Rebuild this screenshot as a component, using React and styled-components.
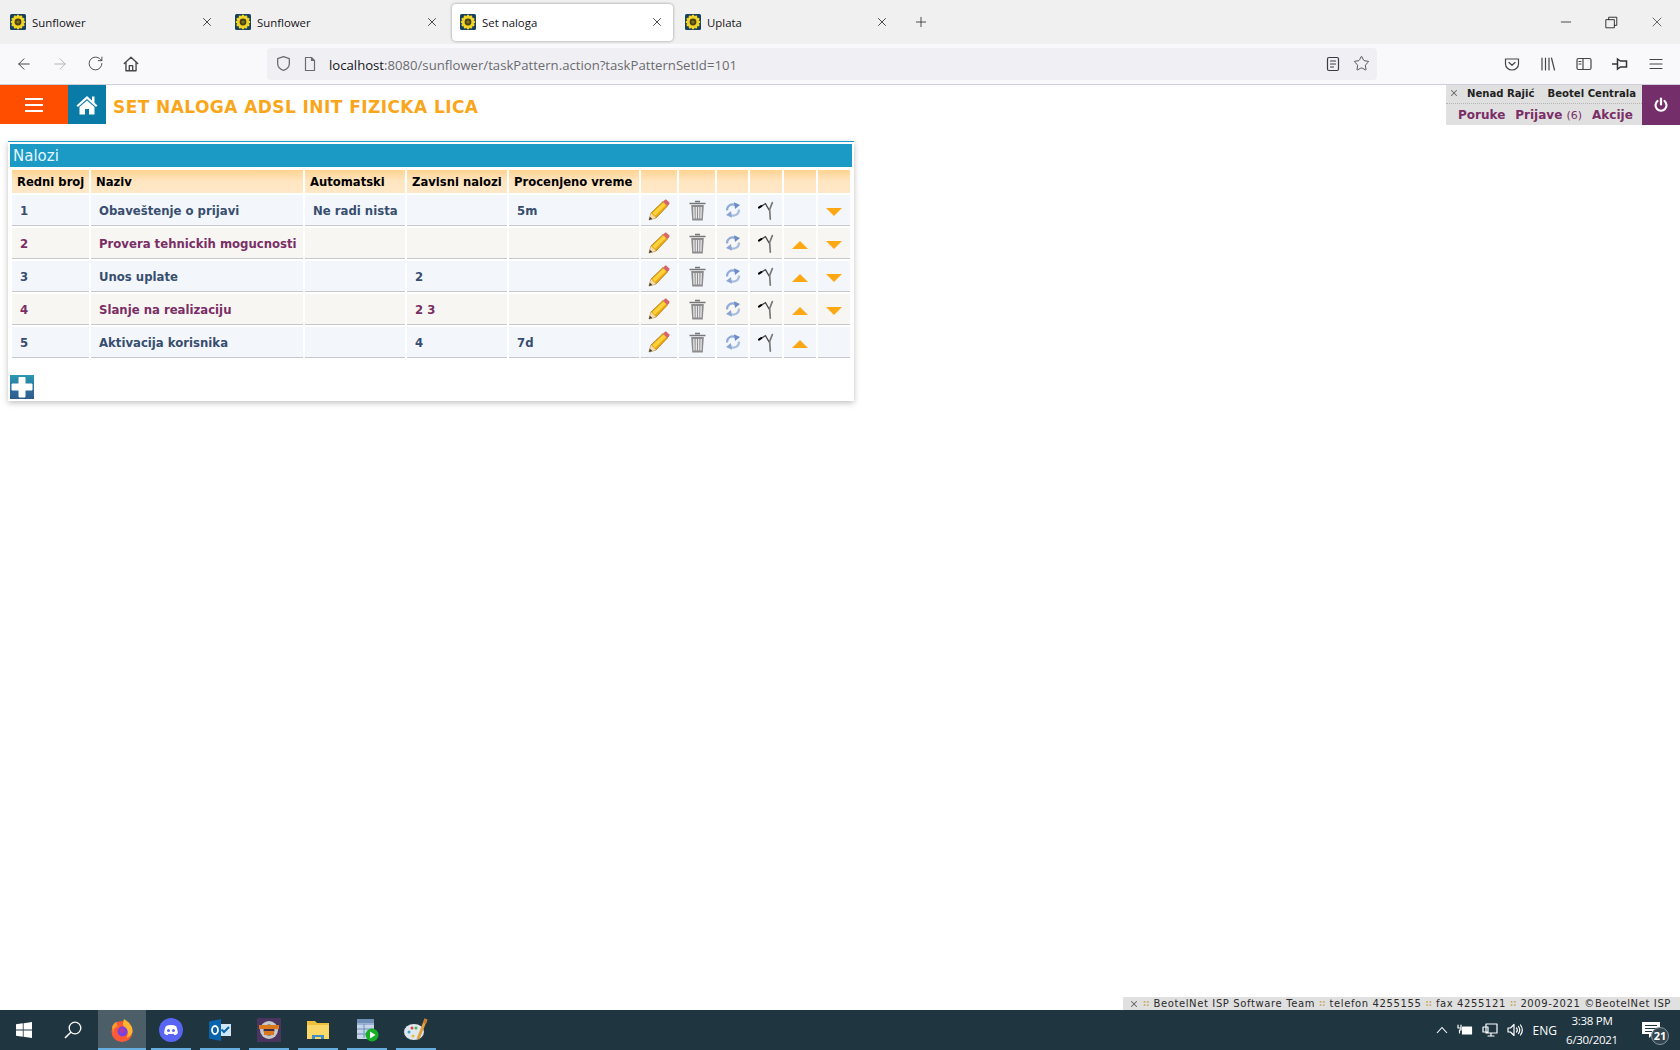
import React from "react";
import styled, { createGlobalStyle } from "styled-components";
import { ArrowLeft, ArrowRight, RotateCw, Star, Plus, X, Minus } from "lucide-react";

const GlobalStyle = createGlobalStyle`
  html, body { margin: 0; padding: 0; background: #fff; }
  body { font-family: "DejaVu Sans", Verdana, sans-serif; overflow: hidden; }
  * { box-sizing: border-box; }
`;

const Page = styled.div`
  display: flex;
  flex-direction: column;
  width: 1680px;
  height: 1050px;
`;

/* browser chrome */
const TabStrip = styled.div`
  display: flex;
  align-items: center;
  height: 44px;
  background: #f0f0f0;
  padding: 0 0 0 2px;
  gap: 4px;
  font-family: "Open Sans", "Noto Sans", sans-serif;
`;

const Tab = styled.div`
  display: flex;
  align-items: center;
  width: 221px;
  height: 37px;
  padding: 0 9px 0 8px;
  border-radius: 4px;
  font-size: 11.4px;
  color: #15141a;
  background: ${(p) => (p.$active ? "#fff" : "transparent")};
  box-shadow: ${(p) => (p.$active ? "0 0 3px rgba(0,0,0,.4)" : "none")};
`;

const TabLabel = styled.span`
  flex: 1;
  margin-left: 6px;
`;

const NewTab = styled.div`
  display: flex;
  margin-left: 11px;
  color: #333;
`;

const WindowControls = styled.div`
  display: flex;
  align-items: center;
  margin-left: auto;
  gap: 31px;
  padding-right: 15px;
  color: #222;
`;

const NavBar = styled.div`
  display: flex;
  align-items: center;
  height: 41px;
  background: #f9f9fb;
  border-bottom: 1px solid #cfcfd8;
  padding: 0 16px 1px 15px;
  color: #4a4a4f;
`;

const NavButtons = styled.div`
  display: flex;
  gap: 18px;
  width: 252px;
`;

const NavSlot = styled.span`
  display: flex;
  color: ${(p) => (p.$muted ? "#b4b4b8" : "#45454a")};
`;

const UrlBar = styled.div`
  display: flex;
  align-items: center;
  width: 1110px;
  height: 32px;
  background: #f0f0f4;
  border-radius: 4px;
  padding: 0 7px 0 8px;
  gap: 10px;
  font-family: "Open Sans", "Noto Sans", sans-serif;
  font-size: 13.15px;
  color: #6b6b70;
`;

const UrlText = styled.span`
  flex: 1;
  padding: 2px 0 0 1px;
`;

const UrlHost = styled.span`
  color: #15141a;
`;

const UrlActions = styled.div`
  display: flex;
  align-items: center;
  gap: 12px;
  color: #3a3a40;
`;

const NavTools = styled.div`
  display: flex;
  margin-left: auto;
  gap: 20px;
`;

/* application header */
const AppHeader = styled.header`
  display: flex;
  height: 40px;
  background: #fff;
`;

const MenuButton = styled.div`
  display: flex;
  align-items: center;
  justify-content: center;
  width: 68px;
  height: 39px;
  background: #ff4e00;
`;

const HomeButton = styled.div`
  display: flex;
  align-items: center;
  justify-content: center;
  width: 38px;
  height: 39px;
  background: #0a7aa6;
`;

const PageTitle = styled.h1`
  margin: 0 0 0 7px;
  padding-top: 3px;
  flex: 1;
  font-size: 17px;
  line-height: 39px;
  font-weight: 700;
  color: #faa61a;
  letter-spacing: 0.43px;
`;

const UserBox = styled.div`
  display: flex;
  flex-direction: column;
  width: 196px;
  height: 40px;
  background: #e0e0e0;
  white-space: nowrap;
`;

const UserRow = styled.div`
  display: flex;
  align-items: center;
  height: 19px;
  padding: 0 0 2px 3px;
  font-size: 10.1px;
  font-weight: 700;
  color: #222;
  border-bottom: 1px dotted #b5b5b5;
`;

const UserName = styled.span`
  margin-left: ${(p) => p.$gap}px;
`;

const UserLinks = styled.div`
  display: flex;
  align-items: center;
  flex: 1;
  padding-left: 12px;
  gap: 10px;
  font-size: 12px;
  font-weight: 700;
  color: #7a2e66;
`;

const Count = styled.span`
  font-weight: 400;
  font-size: 11px;
`;

const PowerButton = styled.div`
  display: flex;
  align-items: center;
  justify-content: center;
  width: 38px;
  height: 40px;
  background: #742f6a;
`;

/* content */
const Main = styled.main`
  flex: 1;
  padding: 16px 0 0 8px;
`;

const Panel = styled.section`
  width: 846px;
  padding: 2px;
  border-top: 1px solid #1b9ac6;
  background: #fff;
  box-shadow: 0 2px 6px rgba(0, 0, 0, 0.25);
`;

const PanelTitle = styled.div`
  height: 23px;
  padding-left: 3px;
  background: #1b9ac6;
  color: #e4f6fc;
  font-size: 15px;
  line-height: 25px;
`;

const Table = styled.table`
  table-layout: fixed;
  width: 842px;
  margin-top: 1px;
  border-collapse: separate;
  border-spacing: 2px;
`;

const HeadCell = styled.th`
  height: 23px;
  padding: 0 5px;
  text-align: left;
  font-size: 11.6px;
  font-weight: 700;
  white-space: nowrap;
  color: #000;
  background: linear-gradient(#ffd391, #ffe6c2 50%, #ffe8c8);
`;

const Cell = styled.td`
  height: 31px;
  padding: 1px 8px 0;
  font-size: 11.7px;
  font-weight: 700;
  white-space: nowrap;
  color: ${(p) => (p.$even ? "#7a2e66" : "#384e6f")};
  background: ${(p) => (p.$even ? "#f8f6f3" : "#f3f7fc")};
  border-bottom: 1px solid #c6c8cc;
`;

const IconCell = styled(Cell)`
  padding: 0;
  text-align: center;
  svg { display: block; margin: 0 auto; }
`;

const ArrowCell = styled(IconCell)`
  padding-top: 4px;
`;

const AddButton = styled.div`
  display: flex;
  align-items: center;
  justify-content: center;
  width: 24px;
  height: 24px;
  margin-top: 15px;
  background: linear-gradient(#2a9ab0, #2f6f9c 60%, #2c5c8c);
`;

/* status line and taskbar */
const StatusLine = styled.footer`
  display: flex;
  align-items: center;
  align-self: flex-end;
  width: 557px;
  height: 13px;
  padding-left: 6px;
  gap: 4px;
  background: #e0e0e0;
  color: #2a2a2a;
  font-size: 10px;
  letter-spacing: 0.62px;
  white-space: nowrap;
`;

const Sep = styled.span`
  color: #c9a95c;
  font-weight: 700;
  font-size: 8px;
  letter-spacing: 0;
`;

const Taskbar = styled.div`
  display: flex;
  align-items: stretch;
  height: 40px;
  background: #1f3540;
  color: #fff;
`;

const TaskIcon = styled.div`
  display: flex;
  align-items: center;
  justify-content: center;
  width: 48px;
  margin-right: 1px;
`;

const TaskApp = styled(TaskIcon)`
  position: relative;
  background: ${(p) => (p.$active ? "#4c5f69" : "transparent")};
  &::after {
    content: "";
    position: absolute;
    left: ${(p) => (p.$active ? 0 : "4px")};
    right: ${(p) => (p.$active ? 0 : "4px")};
    bottom: 0;
    height: 2px;
    background: #66aee0;
  }
`;

const Tray = styled.div`
  display: flex;
  align-items: center;
  margin-left: auto;
  gap: 9px;
  font-family: "Open Sans", "Noto Sans", sans-serif;
  font-size: 12px;
`;

const Lang = styled.span`
  margin-left: 1px;
`;

const Clock = styled.div`
  display: flex;
  flex-direction: column;
  align-items: center;
  width: 52px;
  font-size: 11.5px;
  letter-spacing: -0.3px;
  line-height: 19px;
  white-space: nowrap;
`;

const Notify = styled.div`
  position: relative;
  display: flex;
  margin: 0 19px 0 14px;
`;

const Badge = styled.span`
  position: absolute;
  right: -8px;
  bottom: -6px;
  width: 18px;
  height: 18px;
  border-radius: 50%;
  border: 1px solid #8a979e;
  background: #33464f;
  font-size: 11px;
  font-weight: 700;
  line-height: 16px;
  text-align: center;
`;

/* drawings */
const petals = [0, 30, 60, 90, 120, 150];

const Favicon = () => (
  <svg width="16" height="16" viewBox="0 0 16 16">
    <rect width="16" height="16" rx="1.5" fill="#16405e" />
    {petals.map((deg) => (
      <ellipse key={deg} cx="8" cy="8" rx="2.6" ry="7.4" fill="#f2d426" transform={`rotate(${deg} 8 8)`} />
    ))}
    <circle cx="8" cy="8" r="3.4" fill="#4a4214" />
    <circle cx="8" cy="8" r="1.6" fill="#7d7420" />
  </svg>
);

const Line = ({ size = 16, children, sw = 1.2 }) => (
  <svg width={size} height={size} viewBox="0 0 16 16" fill="none" stroke="currentColor" strokeWidth={sw} strokeLinecap="round" strokeLinejoin="round">
    {children}
  </svg>
);

const RestoreIcon = () => (
  <Line size={13} sw={1.1}>
    <path d="M1.5 4.500h10v10h-10zM4.500 4.500v-3h10v10h-3" />
  </Line>
);

const HomeOutline = () => (
  <Line size={18}>
    <path d="M2 7.500 8 2l6 5.500M3.500 6.500V14h9V6.500M6.500 14V9.500h3V14" />
  </Line>
);

const Shield = () => (
  <Line size={17}>
    <path d="M8 1.500 13.500 3.500v4.500c0 3.200-2.400 5.400-5.500 6.500C4.900 13.400 2.500 11.200 2.500 8V3.500z" />
  </Line>
);

const PageIcon = () => (
  <Line size={16}>
    <path d="M3.500 1.500h6l3 3v10h-9zM9.500 1.500v3h3" />
  </Line>
);

const Reader = () => (
  <Line size={16}>
    <rect x="2.500" y="1.500" width="11" height="13" rx="1.500" />
    <path d="M5.500 5h5M5.500 8h5M5.500 11h3" />
  </Line>
);

const Pocket = () => (
  <Line size={16}>
    <path d="M1.500 3h13v5a6.500 6 0 0 1-13 0zM5 6.500l3 2.800 3-2.800" />
  </Line>
);

const LibraryIcon = () => (
  <Line size={16}>
    <path d="M2 2v12M5.500 2v12M9 2v12M11.500 2l3 12" />
  </Line>
);

const SidebarIcon = () => (
  <Line size={16}>
    <rect x="1" y="2.500" width="14" height="11" rx="1.500" />
    <path d="M7 2.500v11M3 5.500h2M3 8h2" />
  </Line>
);

const PinIcon = () => (
  <svg width="16" height="16" viewBox="0 0 16 16" fill="none" stroke="#33333a" strokeWidth="1.500">
    <path d="M0 8h5" />
    <path d="M5.500 3 8.500 5h6v6h-6l-3 2z" />
  </svg>
);

const BurgerThin = () => (
  <Line size={16}>
    <path d="M2 3.500h12M2 8h12M2 12.500h12" />
  </Line>
);

const Burger = () => (
  <svg width="18" height="16" viewBox="0 0 18 16" fill="none" stroke="#fff" strokeWidth="2">
    <path d="M0 2h18M0 8h18M0 14h18" />
  </svg>
);

const HouseIcon = () => (
  <svg width="22" height="20" viewBox="0 0 22 20">
    <path d="M11 1 0.500 10.500 2 12l9-8 9 8 1.500-1.500-3-2.800V1.500h-2.500v3.900z" fill="#fff" />
    <path d="M11 5.500 3.500 12v7.500h5.500v-5.500h4v5.500h5.500V12z" fill="#fff" />
  </svg>
);

const PowerIcon = () => (
  <svg width="16" height="16" viewBox="0 0 16 16" fill="none" stroke="#fff" strokeWidth="2.200" strokeLinecap="round">
    <path d="M8 1.500v6" />
    <path d="M4.500 4a5.500 5.500 0 1 0 7 0" />
  </svg>
);

const PencilIcon = () => (
  <svg width="22" height="22" viewBox="0 0 22 22">
    <path d="M1 21 3 14 15 2.500l4.500 4.500L8 19z" fill="#eda90f" stroke="#9c7014" strokeWidth=".7" />
    <path d="M4.500 14 15.500 3.500 18 6 7 16.800z" fill="#ffd23c" />
    <path d="M1 21 3 14l5 5z" fill="#f4dcb0" />
    <path d="M1 21l.9-3.300 2.400 2.400z" fill="#333" />
    <path d="M15 2.500 16.800 .9c.6-.5 1.300-.5 1.900 0l2.400 2.400c.5.600.5 1.300 0 1.900L19.500 7z" fill="#d9646a" />
  </svg>
);

const TrashIcon = () => (
  <svg width="17" height="21" viewBox="0 0 17 21">
    <path d="M6 1.500h5M.5 3.500h16" stroke="#77777a" strokeWidth="1.600" fill="none" />
    <path d="M2.200 5h12.600l-1 15.500H3.200z" fill="#8c8c8f" />
    <path d="M4.800 7l.3 11.500M7.300 7v11.500M9.700 7v11.500M12.200 7l-.3 11.500" stroke="#ececec" strokeWidth="1.300" fill="none" />
  </svg>
);

const RefreshIcon = () => (
  <svg width="16" height="16" viewBox="0 0 16 16" fill="none">
    <path d="M2 8.500C1.800 4 6 1.200 10.500 3" stroke="#93abd8" strokeWidth="2.200" />
    <path d="M9 .2 15 3l-5 4z" fill="#6b8cc6" />
    <path d="M14 7.500C14.200 12 10 14.800 5.500 13" stroke="#a9bde0" strokeWidth="2.200" />
    <path d="M7 15.800 1 13l5-4z" fill="#8ca6d4" />
  </svg>
);

const ToolIcon = () => (
  <svg width="17" height="19" viewBox="0 0 16 18" fill="none" strokeLinecap="round">
    <path d="M3 5 7 2.500 10.500 8.500" stroke="#4a4a4a" strokeWidth="1.300" />
    <path d="M.8 6.200 3 4.800" stroke="#000" strokeWidth="2" />
    <path d="M13.500 1.500 11 8l.6 9.200" stroke="#7a7a7a" strokeWidth="1.600" />
  </svg>
);

const UpArrow = () => (
  <svg width="16" height="8" viewBox="0 0 16 8">
    <path d="M8 0 16 8H0z" fill="#ffa815" />
  </svg>
);

const DownArrow = () => (
  <svg width="16" height="8" viewBox="0 0 16 8">
    <path d="M0 0H16L8 8z" fill="#ffa815" />
  </svg>
);

const AddCross = () => (
  <svg width="22" height="22" viewBox="0 0 22 22">
    <path d="M8 1.500h6V8h7v6h-7v7H8v-7H1V8h7z" fill="#fff" stroke="#fff" strokeLinejoin="round" />
  </svg>
);

const WindowsLogo = () => (
  <svg width="16" height="16" viewBox="0 0 16 16" fill="#fff">
    <path d="M0 2.300 6.800 1.300v6.300H0zM7.600 1.200 16 0v7.600H7.600zM0 8.400h6.800v6.300L0 13.700zM7.600 8.400H16V16l-8.400-1.200z" />
  </svg>
);

const SearchGlass = () => (
  <svg width="18" height="18" viewBox="0 0 18 18" fill="none" stroke="#fff" strokeWidth="1.300">
    <circle cx="11" cy="7" r="5.800" />
    <path d="M6.800 11.200 1 17" strokeWidth="1.600" />
  </svg>
);

const FirefoxLogo = () => (
  <svg width="24" height="24" viewBox="0 0 24 24">
    <circle cx="12" cy="13.500" r="10.500" fill="#ff5a36" />
    <path d="M14 1c5 3 9 7 8.500 13-1 3-3 5-6 6 2-4 2-8-2.500-11-1.500-2-1-5 0-8z" fill="#ffb52e" />
    <path d="M2 9c1-3 3-5 5-5-1 2 0 3 1 4-3 1-5 3-4.500 8z" fill="#ff9a2e" />
    <circle cx="12.500" cy="13.500" r="5" fill="#7542e5" />
    <circle cx="12" cy="12.500" r="2.500" fill="#b03ba8" />
  </svg>
);

const DiscordLogo = () => (
  <svg width="24" height="24" viewBox="0 0 24 24">
    <circle cx="12" cy="12" r="12" fill="#5865f2" />
    <path d="M7 8c3-1.200 7-1.200 10 0 1.300 2.500 1.800 5 1.800 7.500-1.300 1-2.500 1.500-3.500 1.600l-.8-1.300c-1.600.4-3.400.4-5 0l-.8 1.300c-1-.1-2.200-.6-3.500-1.600C5.200 13 5.700 10.500 7 8z" fill="#fff" />
    <circle cx="9.500" cy="12.500" r="1.500" fill="#5865f2" />
    <circle cx="14.500" cy="12.500" r="1.500" fill="#5865f2" />
  </svg>
);

const OutlookLogo = () => (
  <svg width="24" height="24" viewBox="0 0 24 24">
    <rect x="11" y="6" width="12" height="12" fill="#cfe6f7" />
    <path d="M13.500 11.500l2.500 2.500 5-5" stroke="#0a64ad" strokeWidth="2" fill="none" />
    <path d="M1 3.500 13 1v22L1 20.500z" fill="#0a64ad" />
    <ellipse cx="7" cy="12" rx="3" ry="4" fill="none" stroke="#fff" strokeWidth="1.800" />
  </svg>
);

const IdeLogo = () => (
  <svg width="24" height="24" viewBox="0 0 24 24">
    <rect width="24" height="24" fill="#4a3560" />
    <circle cx="12" cy="12" r="9" fill="#c8c8c8" />
    <circle cx="12" cy="12" r="5.500" fill="#3d2a4c" />
    <rect x="2" y="7" width="20" height="4" fill="#d9791c" />
    <rect x="7" y="13" width="10" height="4" fill="#d9791c" />
  </svg>
);

const FolderLogo = () => (
  <svg width="24" height="24" viewBox="0 0 24 24">
    <path d="M1 3h8l2 2h12v16H1z" fill="#f0c23c" />
    <path d="M1 7h22v14H1z" fill="#fbd968" />
    <path d="M6 21v-4h12v4h-3v-2H9v2z" fill="#3f8fc4" />
  </svg>
);

const TableRunLogo = () => (
  <svg width="24" height="24" viewBox="0 0 24 24">
    <rect x="2" y="1" width="17" height="20" rx="1" fill="#c7d6ea" />
    <path d="M2 6h17M2 11h17M2 16h12M9 6v14" stroke="#6f8fb8" strokeWidth="1" />
    <rect x="2" y="1" width="17" height="4" fill="#6f8fb8" />
    <circle cx="17" cy="17" r="6.500" fill="#15b024" />
    <path d="M15 13.500 20.500 17 15 20.500z" fill="#fff" />
  </svg>
);

const PaintLogo = () => (
  <svg width="24" height="24" viewBox="0 0 24 24">
    <ellipse cx="10" cy="14" rx="10" ry="8" fill="#dfe8ee" />
    <circle cx="5" cy="14" r="1.500" fill="#3fa0d8" />
    <circle cx="8" cy="10" r="1.500" fill="#e04040" />
    <circle cx="12" cy="10" r="1.500" fill="#50b050" />
    <circle cx="9" cy="18" r="1.500" fill="#e0c040" />
    <path d="M22 1 14 21" stroke="#e0a040" strokeWidth="3" />
    <path d="M20.500 0.500 23.500 2 22 6l-3-1.200z" fill="#c87a30" />
  </svg>
);

const TrayChevron = () => (
  <svg width="12" height="8" viewBox="0 0 12 8" fill="none" stroke="#fff" strokeWidth="1.100">
    <path d="M1 7l5-5.500L11 7" />
  </svg>
);

const TrayPower = () => (
  <Line size={16}>
    <rect x="5.500" y="5" width="9" height="7" fill="#fff" />
    <path d="M1 3v3M4 3v3M1 6h3v2H2.500v3" />
  </Line>
);

const TrayNetwork = () => (
  <Line size={16}>
    <path d="M4 2h11v9H4zM1 5h5v5H1zM9 11v3M6 14h6" />
  </Line>
);

const TraySound = () => (
  <Line size={16}>
    <path d="M1 6h2.500L7 2.500v11L3.500 10H1zM9.500 6c1 1.200 1 2.800 0 4M11.500 4.500c1.600 2.200 1.600 4.800 0 7M13.500 3c2.200 3 2.200 7 0 10" />
  </Line>
);

const TrayMessages = () => (
  <svg width="20" height="18" viewBox="0 0 20 18" fill="#fff">
    <path d="M1 1h18v12h-7l-4 4v-4H1z" />
    <path d="M4 4.500h12M4 7.500h12M4 10.500h7" stroke="#1f3540" strokeWidth="1.100" />
  </svg>
);

/* data */
const tabs = [
  { label: "Sunflower" },
  { label: "Sunflower" },
  { label: "Set naloga", active: true },
  { label: "Uplata" },
];

const columns = [
  { title: "Redni broj", width: 77 },
  { title: "Naziv", width: 212 },
  { title: "Automatski", width: 100 },
  { title: "Zavisni nalozi", width: 100 },
  { title: "Procenjeno vreme", width: 130 },
  { title: "", width: 36 },
  { title: "", width: 36 },
  { title: "", width: 31 },
  { title: "", width: 32 },
  { title: "", width: 32 },
  { title: "", width: 32 },
];

const rows = [
  { no: "1", name: "Obaveštenje o prijavi", auto: "Ne radi nista", deps: "", time: "5m", up: false, down: true },
  { no: "2", name: "Provera tehnickih mogucnosti", auto: "", deps: "", time: "", up: true, down: true },
  { no: "3", name: "Unos uplate", auto: "", deps: "2", time: "", up: true, down: true },
  { no: "4", name: "Slanje na realizaciju", auto: "", deps: "2 3", time: "", up: true, down: true },
  { no: "5", name: "Aktivacija korisnika", auto: "", deps: "4", time: "7d", up: true, down: false },
];

const apps = [
  { key: "firefox", logo: <FirefoxLogo />, active: true },
  { key: "discord", logo: <DiscordLogo /> },
  { key: "outlook", logo: <OutlookLogo /> },
  { key: "ide", logo: <IdeLogo /> },
  { key: "folder", logo: <FolderLogo /> },
  { key: "table", logo: <TableRunLogo /> },
  { key: "paint", logo: <PaintLogo /> },
];

const App = () => {
  return (
    <Page>
      <GlobalStyle />
      <TabStrip>
        {tabs.map((tab, i) => (
          <Tab key={i} $active={tab.active}>
            <Favicon />
            <TabLabel>{tab.label}</TabLabel>
            <X size={14} strokeWidth={1.3} />
          </Tab>
        ))}
        <NewTab>
          <Plus size={16} strokeWidth={1.3} />
        </NewTab>
        <WindowControls>
          <Minus size={16} strokeWidth={1.2} />
          <RestoreIcon />
          <X size={16} strokeWidth={1} />
        </WindowControls>
      </TabStrip>

      <NavBar>
        <NavButtons>
          <NavSlot><ArrowLeft size={18} strokeWidth={1.3} /></NavSlot>
          <NavSlot $muted><ArrowRight size={18} strokeWidth={1.3} /></NavSlot>
          <NavSlot><RotateCw size={17} strokeWidth={1.3} /></NavSlot>
          <NavSlot><HomeOutline /></NavSlot>
        </NavButtons>
        <UrlBar>
          <Shield />
          <PageIcon />
          <UrlText>
            <UrlHost>localhost</UrlHost>:8080/sunflower/taskPattern.action?taskPatternSetId=101
          </UrlText>
          <UrlActions>
            <Reader />
            <Star size={17} strokeWidth={1.2} />
          </UrlActions>
        </UrlBar>
        <NavTools>
          <NavSlot><Pocket /></NavSlot>
          <NavSlot><LibraryIcon /></NavSlot>
          <NavSlot><SidebarIcon /></NavSlot>
          <NavSlot><PinIcon /></NavSlot>
          <NavSlot><BurgerThin /></NavSlot>
        </NavTools>
      </NavBar>

      <AppHeader>
        <MenuButton><Burger /></MenuButton>
        <HomeButton><HouseIcon /></HomeButton>
        <PageTitle>SET NALOGA ADSL INIT FIZICKA LICA</PageTitle>
        <UserBox>
          <UserRow>
            <X size={10} strokeWidth={2.5} color="#666" />
            <UserName $gap={8}>Nenad Rajić</UserName>
            <UserName $gap={13}>Beotel Centrala</UserName>
          </UserRow>
          <UserLinks>
            <span>Poruke</span>
            <span>Prijave <Count>(6)</Count></span>
            <span>Akcije</span>
          </UserLinks>
        </UserBox>
        <PowerButton><PowerIcon /></PowerButton>
      </AppHeader>

      <Main>
        <Panel>
          <PanelTitle>Nalozi</PanelTitle>
          <Table>
            <colgroup>
              {columns.map((col, i) => (
                <col key={i} width={col.width} />
              ))}
            </colgroup>
            <thead>
              <tr>
                {columns.map((col, i) => (
                  <HeadCell key={i}>{col.title}</HeadCell>
                ))}
              </tr>
            </thead>
            <tbody>
              {rows.map((row, i) => {
                const even = i % 2 === 1;
                return (
                  <tr key={row.no}>
                    <Cell $even={even}>{row.no}</Cell>
                    <Cell $even={even}>{row.name}</Cell>
                    <Cell $even={even}>{row.auto}</Cell>
                    <Cell $even={even}>{row.deps}</Cell>
                    <Cell $even={even}>{row.time}</Cell>
                    <IconCell $even={even}><PencilIcon /></IconCell>
                    <IconCell $even={even}><TrashIcon /></IconCell>
                    <IconCell $even={even}><RefreshIcon /></IconCell>
                    <IconCell $even={even}><ToolIcon /></IconCell>
                    <ArrowCell $even={even}>{row.up && <UpArrow />}</ArrowCell>
                    <ArrowCell $even={even}>{row.down && <DownArrow />}</ArrowCell>
                  </tr>
                );
              })}
            </tbody>
          </Table>
          <AddButton><AddCross /></AddButton>
        </Panel>
      </Main>

      <StatusLine>
        <X size={10} strokeWidth={2.5} color="#666" />
        <Sep>::</Sep>
        <span>BeotelNet ISP Software Team</span>
        <Sep>::</Sep>
        <span>telefon 4255155</span>
        <Sep>::</Sep>
        <span>fax 4255121</span>
        <Sep>::</Sep>
        <span>2009-2021 ©BeotelNet ISP</span>
      </StatusLine>

      <Taskbar>
        <TaskIcon><WindowsLogo /></TaskIcon>
        <TaskIcon><SearchGlass /></TaskIcon>
        {apps.map((app) => (
          <TaskApp key={app.key} $active={app.active}>{app.logo}</TaskApp>
        ))}
        <Tray>
          <TrayChevron />
          <TrayPower />
          <TrayNetwork />
          <TraySound />
          <Lang>ENG</Lang>
          <Clock>
            <span>3:38 PM</span>
            <span>6/30/2021</span>
          </Clock>
          <Notify>
            <TrayMessages />
            <Badge>21</Badge>
          </Notify>
        </Tray>
      </Taskbar>
    </Page>
  );
};

export default App;
